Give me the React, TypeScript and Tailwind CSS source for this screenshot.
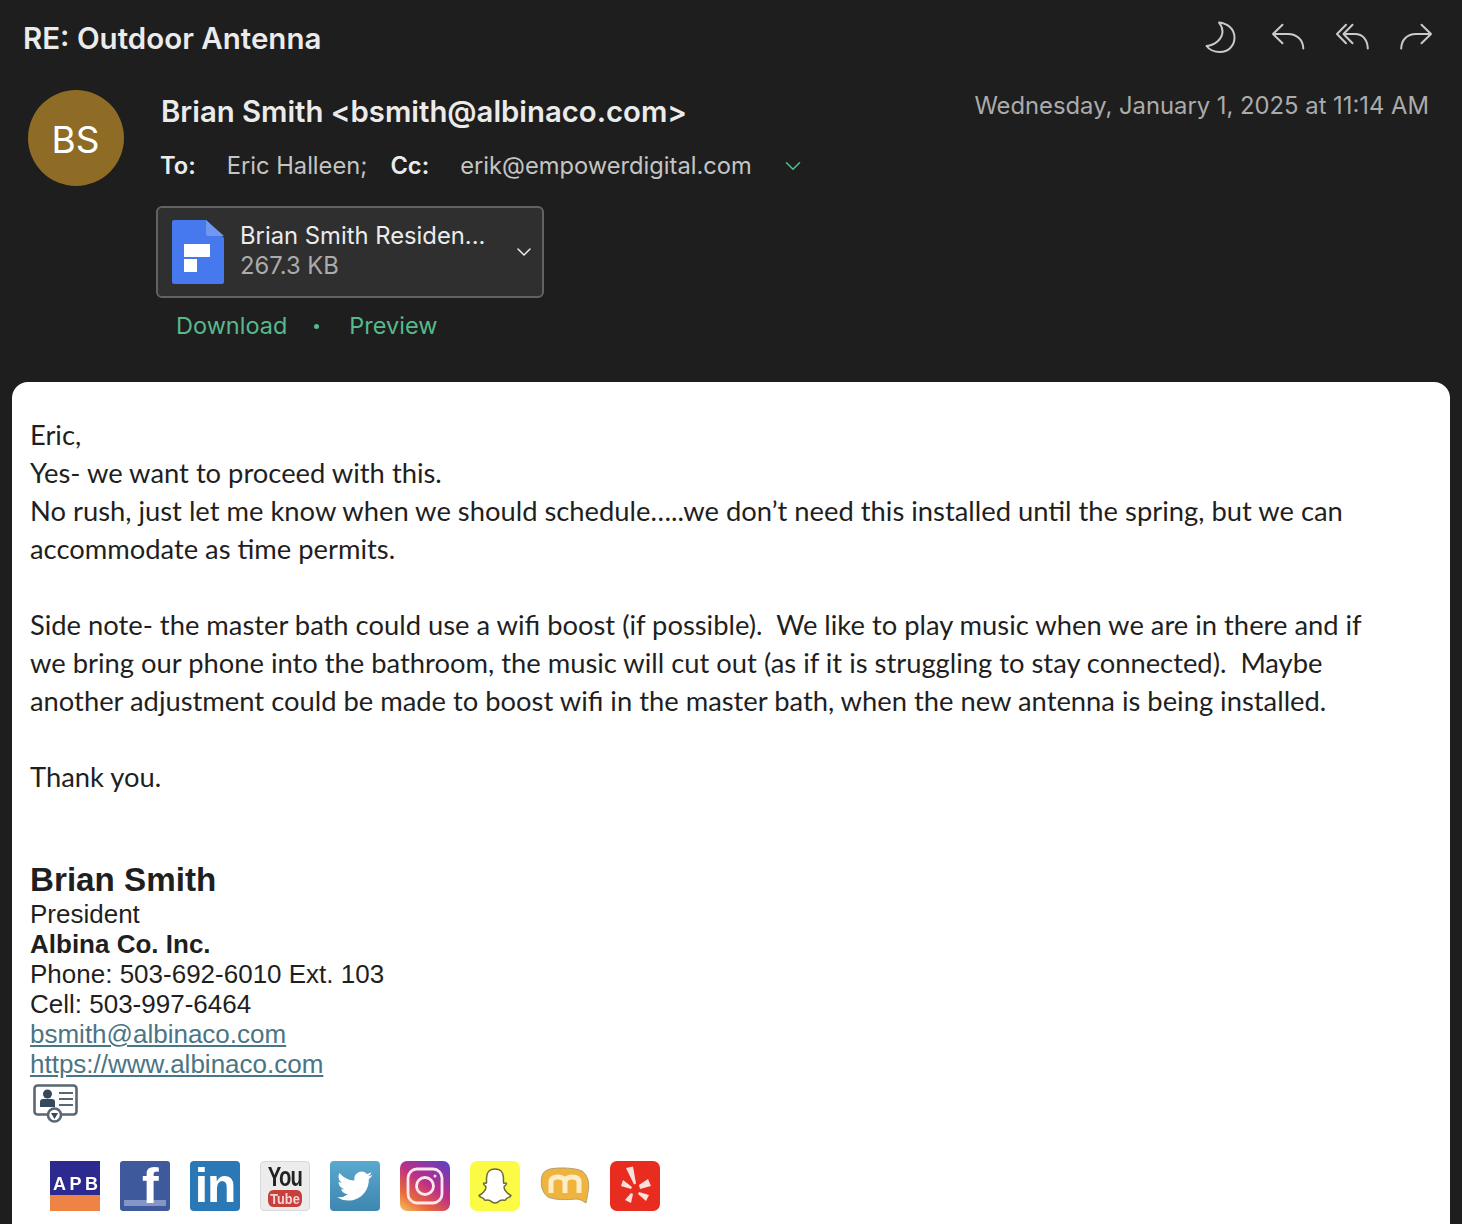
import React from 'react';
import { ChevronDown } from 'lucide-react';

const INTER = "font-['Inter',sans-serif]";

function Moon() {
  return (
    <svg className="mr-[4px]" width="40" height="40" viewBox="0 0 40 40" fill="none" stroke="#c9c9c9" strokeWidth="2" strokeLinejoin="round">
      <path d="M19 3.5C28 4.5 34.5 10 34.5 18.5C34.5 27 28 33 20 33C14.5 33 9.5 31 6.5 27C15 26 22.5 20 22.5 12.5C22.5 9 21 6 19 3.5Z" />
    </svg>
  );
}

function Reply() {
  return (
    <svg width="40" height="40" viewBox="0 0 40 40" fill="none" stroke="#c9c9c9" strokeWidth="2" strokeLinecap="round" strokeLinejoin="round">
      <path d="M14.5 5.7L5 15L14.5 24.3M5 15H20C29 15 35 21 35.3 29.5" />
    </svg>
  );
}

function ReplyAll() {
  return (
    <svg width="40" height="40" viewBox="0 0 40 40" fill="none" stroke="#c9c9c9" strokeWidth="2" strokeLinecap="round" strokeLinejoin="round">
      <path d="M14 5.700L5 15L14 24.300M20.500 5.700L11.500 15L20.500 24.300M11.500 15H23C31 15 35.500 21 35.800 29.500" />
    </svg>
  );
}

function Forward() {
  return (
    <svg width="40" height="40" viewBox="0 0 40 40" fill="none" stroke="#c9c9c9" strokeWidth="2" strokeLinecap="round" strokeLinejoin="round">
      <path d="M25.500 5.700L35 15L25.500 24.300M35 15H20C11 15 5.500 21 5.200 29.500" />
    </svg>
  );
}

function FileIcon() {
  return (
    <svg width="52" height="64" viewBox="0 0 52 64">
      <path d="M2 0H34L52 18V62a2 2 0 0 1-2 2H2a2 2 0 0 1-2-2V2a2 2 0 0 1 2-2Z" fill="#4679ee" />
      <path d="M34 0L52 16H36a2 2 0 0 1-2-2Z" fill="#7098f0" />
      <rect x="12" y="24" width="26" height="13" fill="#fff" />
      <rect x="12" y="39" width="13" height="13" fill="#fff" />
    </svg>
  );
}

function VCard() {
  return (
    <svg className="blur-[0.4px]" width="48" height="40" viewBox="0 0 48 40" fill="none">
      <rect x="2.500" y="2.500" width="42" height="29" rx="3" stroke="#5a6772" strokeWidth="2.600" />
      <circle cx="15.500" cy="11" r="4.500" fill="#35495c" />
      <path d="M8 24V19a3 3 0 0 1 3-3H20a3 3 0 0 1 3 3V24Z" fill="#35495c" />
      <path d="M27 10H41M27 16H41M27 22H41" stroke="#5a6772" strokeWidth="2.200" />
      <circle cx="22.500" cy="32" r="6.500" fill="#fff" stroke="#5a6772" strokeWidth="2.600" />
      <path d="M19 30H26L22.500 36Z" fill="#35495c" />
    </svg>
  );
}

function SocialIcons() {
  return (
    <div className="flex gap-5 pl-5 mt-[38px] blur-[0.7px]">
      {/* APB */}
      <div className="w-[50px] h-[50px] flex flex-col bg-[#2c2a8e]">
        <div className="h-[34px] pt-[14px] text-white font-bold text-[18px] tracking-[3.500px] leading-[18px] pl-[3px] font-['Liberation_Sans',sans-serif]">
          APB
        </div>
        <div className="flex-1 bg-[#ee8346]" />
      </div>

      {/* Facebook */}
      <div className="relative w-[50px] h-[50px] rounded-[3px] bg-[#3f5a9c]">
        <div className="absolute left-[4px] right-[4px] top-[39px] h-[6px] bg-[#8396c6]" />
        <span className="absolute left-[22px] top-0 text-white font-bold text-[50px] leading-[50px] font-['Liberation_Sans',sans-serif]">f</span>
      </div>

      {/* LinkedIn */}
      <div className="w-[50px] h-[50px] rounded-[4px] bg-[#2a78b5] flex items-center justify-center text-white font-bold text-[48px] leading-none tracking-[-1px] font-['Liberation_Sans',sans-serif]">
        in
      </div>

      {/* YouTube */}
      <div className="w-[50px] h-[50px] rounded-[4px] bg-[#ececec] border border-[#d8d8d8] flex flex-col items-center pt-[3px] font-['Liberation_Sans',sans-serif]">
        <span className="text-[#222] font-bold text-[27px] leading-[24px] tracking-[-1px] scale-x-[0.75]">You</span>
        <span className="w-[40px] h-[17px] mt-[1px] rounded-[6px] bg-[#c8403c] text-[#f5d5d5] font-bold text-[15px] leading-[17px] text-center scale-x-[0.85]">Tube</span>
      </div>

      {/* Twitter */}
      <div className="w-[50px] h-[50px] rounded-[4px] bg-gradient-to-b from-[#5aa9cf] to-[#3d86b0] flex items-center justify-center">
        <svg width="38" height="32" viewBox="0 0 24 20" fill="#fff">
          <path d="M23 3c-.8.4-1.7.6-2.6.7.9-.6 1.6-1.4 2-2.4-.9.5-1.8.9-2.9 1.1A4.6 4.6 0 0 0 11.700 6.600C7.900 6.400 4.500 4.600 2.200 1.800c-1.200 2.100-.6 4.800 1.400 6.100-.7 0-1.400-.2-2-.6 0 2.200 1.500 4.100 3.700 4.600-.7.200-1.400.2-2.100.1.600 1.800 2.300 3.100 4.300 3.200A9.300 9.300 0 0 1 .700 17.100 13 13 0 0 0 7.700 19.200c8.500 0 13.300-7.200 13-13.600.9-.7 1.700-1.500 2.300-2.600Z" />
        </svg>
      </div>

      {/* Instagram */}
      <div className="w-[50px] h-[50px] rounded-[7px] bg-[linear-gradient(35deg,#f5c262_0%,#e8683c_25%,#bb2f86_55%,#5a3fc8_100%)] flex items-center justify-center">
        <svg width="40" height="40" viewBox="0 0 40 40" fill="none" stroke="#fbe6ee" strokeWidth="2.800">
          <rect x="3" y="3" width="34" height="34" rx="9" />
          <circle cx="20" cy="20" r="8.500" />
          <circle cx="30" cy="10" r="1.500" fill="#fbe6ee" stroke="none" />
        </svg>
      </div>

      {/* Snapchat */}
      <div className="w-[50px] h-[50px] rounded-[7px] bg-[#fbfb45] flex items-center justify-center">
        <svg width="42" height="42" viewBox="0 0 42 42" fill="#fff" stroke="#6c6c3a" strokeWidth="1.500" strokeLinejoin="round">
          <path d="M21 4C14.500 4 12.500 9 12.500 13C12.500 15 12.700 16.500 12.500 18C11.500 18.500 10 17.500 9.500 18.500C9 20 12 20.500 12 22C12 25 8.500 29 5 30.500C5.500 32.500 8.500 32.500 9.500 33.500C10 35 10.500 35.500 12 35.200C14.500 34.800 16.500 35.500 18 37C20 38.300 22 38.300 24 37C25.500 35.500 27.500 34.800 30 35.200C31.500 35.500 32 35 32.500 33.500C33.500 32.500 36.500 32.500 37 30.500C33.500 29 30 25 30 22C30 20.500 33 20 32.500 18.500C32 17.500 30.500 18.500 29.500 18C29.300 16.500 29.500 15 29.500 13C29.500 9 27.500 4 21 4Z" />
        </svg>
      </div>

      {/* Meetup-style bubble */}
      <div className="w-[50px] h-[50px] flex items-center justify-center">
        <svg width="50" height="40" viewBox="0 0 50 40">
          <path d="M10 3C20 1 36 2 42 5C48 9 50 18 48 26C47 30 47 34 46 37C43 35 40 33 36 33C26 34 14 34 8 31C2 27 0 18 2 10C3 6 6 4 10 3Z" fill="#efb33e" stroke="#b0a070" strokeWidth="1" />
          <path d="M11 27V16C11 12 14 11 18 11C22 11 25 13 25 16V27M25 16C25 13 28 11 32 11C36 11 39 12 39 16V27" fill="none" stroke="#fbeec6" strokeWidth="5" />
        </svg>
      </div>

      {/* Yelp */}
      <div className="w-[50px] h-[50px] rounded-[7px] bg-[#e82c20] flex items-center justify-center">
        <svg width="40" height="42" viewBox="0 0 40 42" fill="#fbe0dc">
          <path d="M11 3L18 1.500L21 18.500L19 19.500Z" />
          <path d="M6 21L8 15L17 22L16 24Z" />
          <path d="M24 20L33 14L36 21L25 24Z" />
          <path d="M16 28L18 29L16 38L10 35Z" />
          <path d="M24 27L34 30L31 36L23 29Z" />
        </svg>
      </div>
    </div>
  );
}

export default function App() {
  return (
    <div className={`w-[1462px] h-[1224px] overflow-hidden bg-[#1e1e1e] ${INTER}`}>
      {/* Header */}
      <div className="h-[382px] relative">
        <div className="flex items-center justify-between h-[76px] pl-[23px] pr-[26px]">
          <h1 className="mt-[2px] text-[29.500px] font-semibold text-[#ebebeb] leading-none">RE: Outdoor Antenna</h1>
          <div className="flex gap-6 mt-[1px]">
            <Moon />
            <Reply />
            <ReplyAll />
            <Forward />
          </div>
        </div>

        <div className="flex pl-[28px] pr-[33px] pt-[14px]">
          <div className="w-[96px] h-[96px] rounded-full bg-[#8f6c26] text-white text-[37px] flex items-center justify-center shrink-0 pt-[3px] pr-[1px]">
            BS
          </div>
          <div className="ml-[37px] mt-[1px] flex-1">
            <div className="flex justify-between">
              <div className="text-[29.300px] font-semibold text-[#ebebeb] leading-[42px]">Brian Smith &lt;bsmith@albinaco.com&gt;</div>
              <div className="text-[23.800px] text-[#ababab] leading-[30px]">Wednesday, January 1, 2025 at 11:14 AM</div>
            </div>
            <div className="flex items-center -ml-[1px] mt-[18px] text-[23.700px] leading-[30px]">
              <span className="font-semibold text-[#ebebeb]">To:</span>
              <span className="ml-[31px] text-[#c4c4c4]">Eric Halleen;</span>
              <span className="ml-[23px] font-semibold text-[#ebebeb]">Cc:</span>
              <span className="ml-[31px] text-[#c4c4c4]">erik@empowerdigital.com</span>
              <ChevronDown className="ml-[28px] text-[#57b98c]" size={26} strokeWidth={1.5} />
            </div>
            <div className="-ml-[5px] mt-[25px] w-[388px] h-[92px] rounded-[6px] border-2 border-[#626262] bg-[#2f2f2f] flex items-center pl-[14px] pr-[6px]">
              <FileIcon />
              <div className="ml-[16px] mb-[2px] flex-1 text-[23.800px] leading-[30px]">
                <div className="text-[#ebebeb]">Brian Smith Residen...</div>
                <div className="text-[#ababab]">267.3 KB</div>
              </div>
              <ChevronDown className="text-[#ebebeb]" size={24} strokeWidth={1.5} />
            </div>
            <div className="flex items-center mt-[13px] ml-[15px] text-[23.500px] leading-[30px] text-[#57b98c]">
              <span>Download</span>
              <span className="ml-[27px] w-[5px] h-[5px] rounded-full bg-[#57b98c]" />
              <span className="ml-[30px]">Preview</span>
            </div>
          </div>
        </div>
      </div>

      {/* Message body */}
      <div className="mx-[12px] rounded-t-[16px] bg-white h-[900px] pt-[34px] pl-[18px] text-[#1f1f1f]">
        <div className="font-['Lato',sans-serif] text-[27.350px] leading-[38px]">
          <p>Eric,</p>
          <p>Yes- we want to proceed with this.</p>
          <p>No rush, just let me know when we should schedule…..we don’t need this installed until the spring, but we can</p>
          <p>accommodate as time permits.</p>
          <p className="mt-[38px]">Side note- the master bath could use a wifi boost (if possible).&nbsp; We like to play music when we are in there and if</p>
          <p>we bring our phone into the bathroom, the music will cut out (as if it is struggling to stay connected).&nbsp; Maybe</p>
          <p>another adjustment could be made to boost wifi in the master bath, when the new antenna is being installed.</p>
          <p className="mt-[38px]">Thank you.</p>
        </div>

        {/* Signature */}
        <div className="mt-[64px] font-['Liberation_Sans',sans-serif] text-[26px] leading-[30px]">
          <div className="font-bold text-[33.200px] leading-[39px]">Brian Smith</div>
          <div>President</div>
          <div className="font-bold">Albina Co. Inc.</div>
          <div>Phone: 503-692-6010 Ext. 103</div>
          <div>Cell: 503-997-6464</div>
          <div className="text-[#4a7585] underline">bsmith@albinaco.com</div>
          <div className="text-[#4a7585] underline">https://www.albinaco.com</div>
        </div>
        <div className="mt-[4px] ml-[2px]">
          <VCard />
        </div>
        <SocialIcons />
      </div>
    </div>
  );
}
